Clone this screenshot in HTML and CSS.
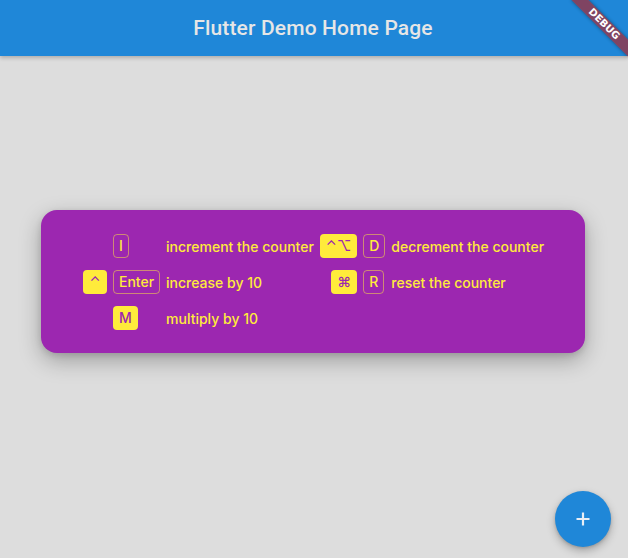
FILE: index.html
```html
<!DOCTYPE html>
<html lang="en">
<head>
<meta charset="utf-8">
<title>Flutter Demo Home Page</title>
<link rel="stylesheet" href="styles.css">
</head>
<body>
<div class="app">
  <header class="appbar">
    <h1 class="title">Flutter Demo Home Page</h1>
  </header>
  <main class="content">
    <section class="card">
      <div class="shortcuts">
        <span class="mods"></span>
        <span class="keycell"><span class="key outline">I</span></span>
        <span class="desc">increment the counter</span>
        <span class="mods"><span class="key filled">⌃⌥</span></span>
        <span class="keycell"><span class="key outline">D</span></span>
        <span class="desc">decrement the counter</span>

        <span class="mods"><span class="key filled">⌃</span></span>
        <span class="keycell"><span class="key outline">Enter</span></span>
        <span class="desc">increase by 10</span>
        <span class="mods"><span class="key filled">⌘</span></span>
        <span class="keycell"><span class="key outline">R</span></span>
        <span class="desc">reset the counter</span>

        <span class="mods"></span>
        <span class="keycell"><span class="key filled">M</span></span>
        <span class="desc">multiply by 10</span>
        <span class="mods"></span>
        <span class="keycell"></span>
        <span class="desc"></span>
      </div>
    </section>
  </main>
  <button class="fab" aria-label="Increment">
    <svg width="16" height="16" viewBox="0 0 16 16"><path d="M8 1.5v13M1.5 8h13" stroke="#e8eef5" stroke-width="2.2" fill="none"/></svg>
  </button>
  <div class="banner-clip">
    <div class="banner">DEBUG</div>
  </div>
</div>
</body>
</html>
```
FILE: styles.css
```css
html, body {
  margin: 0;
  padding: 0;
}
body {
  width: 628px;
  height: 558px;
  overflow: hidden;
  background: #dddddd;
  font-family: Inter, "Noto Sans", "DejaVu Sans", sans-serif;
}
.app {
  position: relative;
  width: 628px;
  height: 558px;
  display: flex;
  flex-direction: column;
  background: #dddddd;
}
.appbar {
  height: 56px;
  flex: none;
  background: #1f87d8;
  display: flex;
  align-items: center;
  justify-content: center;
  box-shadow: 0 2px 4px rgba(0,0,0,0.22);
  position: relative;
  z-index: 1;
}
.title {
  margin: 0 0 0 -2px;
  font-family: Roboto, Inter, sans-serif;
  font-size: 21px;
  font-weight: 500;
  color: #e6e6e6;
  letter-spacing: 0.15px;
}
.content {
  flex: 1;
  padding-top: 154px;
  display: flex;
  flex-direction: column;
  align-items: center;
}
.card {
  width: 544px;
  margin-right: 2px;
  box-sizing: border-box;
  padding: 18px 0 17px;
  background: #9c27b0;
  border-radius: 16px;
  box-shadow: 0 8px 22px rgba(0,0,0,0.28), 0 2px 6px rgba(0,0,0,0.12);
  display: flex;
  justify-content: center;
}
.shortcuts {
  display: grid;
  grid-template-columns: auto auto auto auto auto auto;
  grid-auto-rows: 36px;
  column-gap: 6px;
  align-items: center;
  color: #ffeb3b;
  font-size: 14px;
  font-weight: 500;
  margin-left: 1px;
}
.mods {
  justify-self: end;
  display: flex;
}
.keycell {
  display: flex;
}
.desc {
  white-space: nowrap;
  padding-top: 1px;
}
.key {
  box-sizing: border-box;
  height: 24px;
  padding: 0 5px;
  border-radius: 4px;
  display: inline-flex;
  align-items: center;
  justify-content: center;
  font-size: 14px;
  line-height: 1;
  margin-top: -1px;
}
.key.outline {
  border: 1px solid rgba(255, 235, 59, 0.5);
  color: #ffeb3b;
  min-width: 15px;
}
.key.filled {
  background: #ffeb3b;
  color: #9c27b0;
  min-width: 24px;
  padding: 0 6px;
}
.fab {
  position: absolute;
  right: 17px;
  bottom: 11px;
  width: 56px;
  height: 56px;
  border-radius: 50%;
  border: none;
  padding: 0;
  background: #1f87d8;
  box-shadow: 0 4px 8px rgba(0,0,0,0.25), 0 1px 3px rgba(0,0,0,0.15);
  display: flex;
  align-items: center;
  justify-content: center;
}
.banner-clip {
  position: absolute;
  top: 0;
  right: 0;
  width: 80px;
  height: 80px;
  overflow: hidden;
  z-index: 5;
  pointer-events: none;
}
.banner {
  position: absolute;
  left: 16px;
  top: 18px;
  width: 80px;
  height: 12px;
  transform: rotate(45deg);
  background: rgba(183, 28, 28, 0.63);
  box-shadow: 0 0 4px rgba(0,0,0,0.4);
  color: #ffffff;
  font-family: "DejaVu Sans", sans-serif;
  font-size: 10px;
  font-weight: 900;
  line-height: 12px;
  text-align: center;
  letter-spacing: 0;
}
```
